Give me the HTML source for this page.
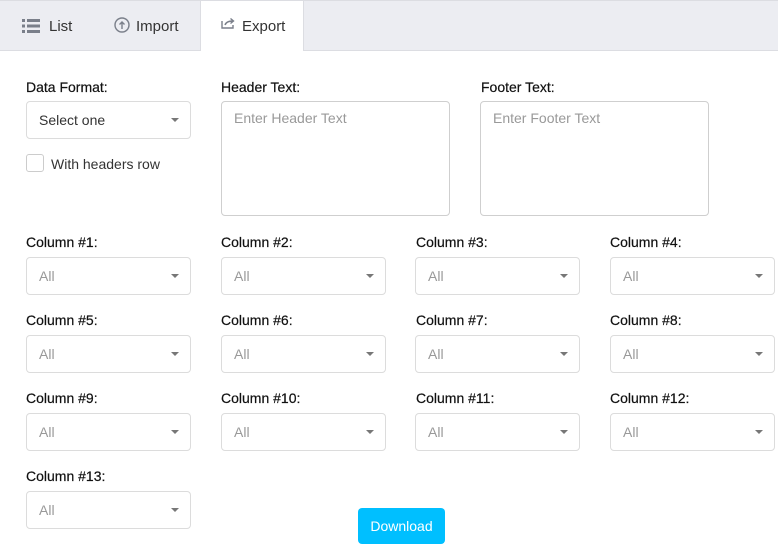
<!DOCTYPE html>
<html><head><style>
*{box-sizing:border-box;margin:0;padding:0}
body{width:778px;height:548px;background:#fff;font-family:"Liberation Sans",Arial,sans-serif;position:relative;overflow:hidden;color:#222}
.bar{position:absolute;left:0;top:0;width:778px;height:51px;background:#ecedf2;border-top:1px solid #dcdde2;border-bottom:1px solid #dcdde2}
.tab{position:absolute;top:2px;height:50px;line-height:50px;font-size:15px;color:#333}
.act{position:absolute;left:200px;top:0;width:104px;height:51px;background:#fff;border-left:1px solid #dcdde2;border-right:1px solid #dcdde2;border-top:1px solid #dcdde2}
.lbl{position:absolute;font-size:14px;color:#111;-webkit-text-stroke:0.2px #111}
.sel{position:absolute;width:165px;height:38px;border:1px solid #dcdcdc;border-radius:4px;background:#fff;font-size:14px;color:#999;padding-left:12px;line-height:36px}
.sel:after{content:"";position:absolute;right:11px;top:16px;border-left:4.5px solid transparent;border-right:4.5px solid transparent;border-top:4.5px solid #777}
.ta{position:absolute;width:229px;height:115px;border:1px solid #cfcfcf;border-radius:4px;font-size:14px;color:#999;padding:8px 12px}
</style></head><body>
<div class="bar"></div>
<div class="act"></div>
<div class="tab" style="left:22px">
<svg width="18" height="14" style="position:absolute;left:0;top:17px" fill="#7a7f8a"><rect x="0" y="0" width="3" height="3"/><rect x="5" y="0" width="13" height="3"/><rect x="0" y="5.5" width="3" height="3"/><rect x="5" y="5.5" width="13" height="3"/><rect x="0" y="11" width="3" height="3"/><rect x="5" y="11" width="13" height="3"/></svg>
<span style="position:absolute;left:27px;top:0">List</span></div>
<div class="tab" style="left:114px">
<svg width="16" height="16" style="position:absolute;left:0;top:15px" fill="none" stroke="#7a7f8a" stroke-width="1.4"><circle cx="8" cy="8" r="7"/><path d="M8 12V5M5.5 7.5L8 5l2.5 2.5"/></svg>
<span style="position:absolute;left:22px;top:0">Import</span></div>
<div class="tab" style="left:221px">
<svg width="14" height="12" style="position:absolute;left:0;top:15px" fill="none" stroke="#7a7f8a" stroke-width="1.4"><path d="M1 4v7h11V8"/><path d="M4 8c1-3 4-4 8-4M9.5 1.5L12.5 4 9.5 6.5"/></svg>
<span style="position:absolute;left:21px;top:0">Export</span></div>

<div class="lbl" style="left:26px;top:79px">Data Format:</div>
<div class="sel" style="left:26px;top:101px;color:#333">Select one</div>
<div style="position:absolute;left:26px;top:154px;width:18px;height:18px;border:1px solid #ccc;border-radius:3px"></div>
<div class="lbl" style="left:51px;top:156px;color:#333;-webkit-text-stroke:0">With headers row</div>
<div class="lbl" style="left:221px;top:79px">Header Text:</div>
<div class="ta" style="left:221px;top:101px">Enter Header Text</div>
<div class="lbl" style="left:481px;top:79px">Footer Text:</div>
<div class="ta" style="left:480px;top:101px">Enter Footer Text</div>

<div class="lbl" style="left:26px;top:234px">Column #1:</div><div class="sel" style="left:26px;top:257px">All</div>
<div class="lbl" style="left:221px;top:234px">Column #2:</div><div class="sel" style="left:221px;top:257px">All</div>
<div class="lbl" style="left:416px;top:234px">Column #3:</div><div class="sel" style="left:415px;top:257px">All</div>
<div class="lbl" style="left:610px;top:234px">Column #4:</div><div class="sel" style="left:610px;top:257px">All</div>

<div class="lbl" style="left:26px;top:312px">Column #5:</div><div class="sel" style="left:26px;top:335px">All</div>
<div class="lbl" style="left:221px;top:312px">Column #6:</div><div class="sel" style="left:221px;top:335px">All</div>
<div class="lbl" style="left:416px;top:312px">Column #7:</div><div class="sel" style="left:415px;top:335px">All</div>
<div class="lbl" style="left:610px;top:312px">Column #8:</div><div class="sel" style="left:610px;top:335px">All</div>

<div class="lbl" style="left:26px;top:390px">Column #9:</div><div class="sel" style="left:26px;top:413px">All</div>
<div class="lbl" style="left:221px;top:390px">Column #10:</div><div class="sel" style="left:221px;top:413px">All</div>
<div class="lbl" style="left:416px;top:390px">Column #11:</div><div class="sel" style="left:415px;top:413px">All</div>
<div class="lbl" style="left:610px;top:390px">Column #12:</div><div class="sel" style="left:610px;top:413px">All</div>

<div class="lbl" style="left:26px;top:468px">Column #13:</div><div class="sel" style="left:26px;top:491px">All</div>

<div style="position:absolute;left:358px;top:508px;width:87px;height:36px;background:#00bfff;border-radius:4px;color:#fff;font-size:14px;text-align:center;line-height:36px">Download</div>
</body></html>
